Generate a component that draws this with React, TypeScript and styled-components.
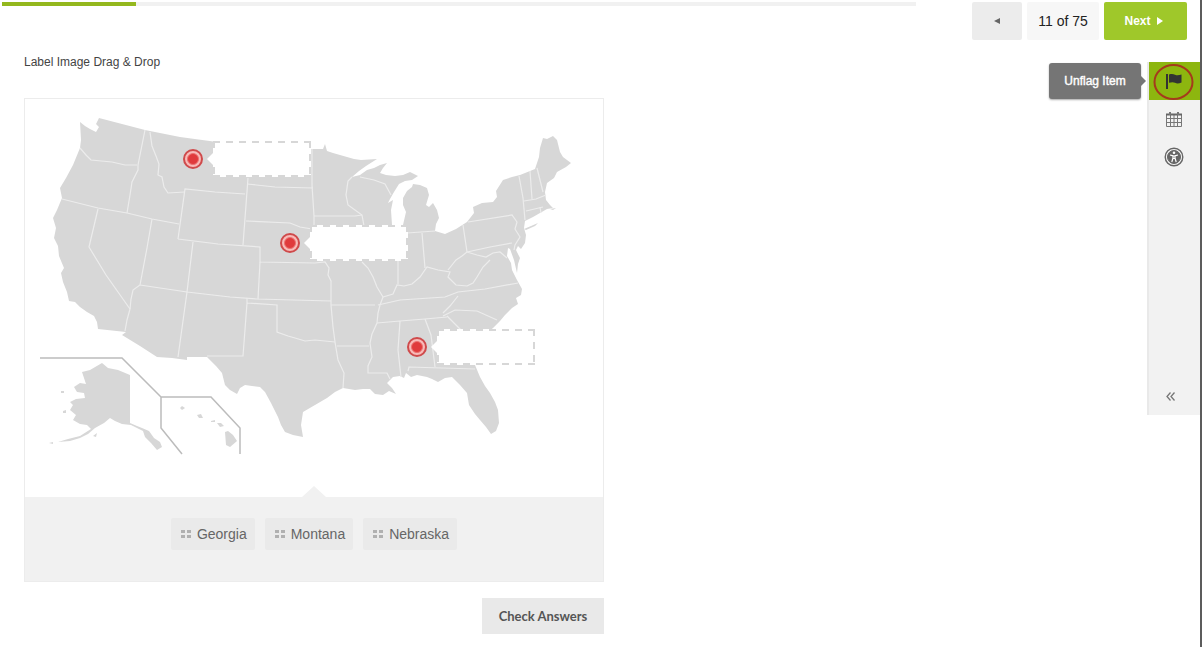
import React from "react";
import styled, { createGlobalStyle } from "styled-components";

const GlobalStyle = createGlobalStyle`
  *, *::before, *::after { box-sizing: border-box; }
  body {
    margin: 0;
    background: #fff;
    color: #444;
    font-family: "Liberation Sans", Arial, sans-serif;
    font-size: 12px;
    line-height: 16px;
  }
  button { font: inherit; color: inherit; border: 0; padding: 0; cursor: pointer; }
`;

const Page = styled.div`
  min-height: 100vh;
  margin-right: 1px;
  border-right: 2px solid #5c5c5c;
`;

const Header = styled.header`
  display: flex;
  align-items: flex-start;
  gap: 56px;
  padding: 2px 13px 0 2px;
`;

const Track = styled.div`
  flex: 1;
  height: 4px;
  background: #f1f1f1;
`;

const Fill = styled.div`
  height: 100%;
  background: #94b81e;
`;

const Pager = styled.nav`
  display: flex;
  gap: 5px;
  height: 38px;
`;

const PrevButton = styled.button`
  display: grid;
  place-items: center;
  width: 50px;
  background: #ececec;
  border-radius: 2px;
`;

const Count = styled.span`
  display: grid;
  place-items: center;
  width: 72px;
  background: #f7f7f7;
  border-radius: 2px;
  color: #222;
  font-size: 14px;
`;

const NextButton = styled.button`
  display: flex;
  align-items: center;
  justify-content: center;
  gap: 6px;
  width: 83px;
  padding-right: 4px;
  background: #9fc82a;
  border-radius: 2px;
  color: #fff;
  font-weight: 700;
`;

const Body = styled.div`
  display: flex;
  align-items: flex-start;
  justify-content: space-between;
`;

const Main = styled.main`
  flex: 0 1 604px;
  padding: 14px 0 13px 24px;
`;

const Title = styled.h1`
  margin: 0 0 28px;
  font-size: 12px;
  line-height: 16px;
  font-weight: 400;
`;

const Card = styled.section`
  border: 1px solid #ececec;
`;

const MapArea = styled.div`
  position: relative;
  overflow: hidden;
`;

const MapSvg = styled.svg`
  display: block;
  width: 100%;
  height: auto;
`;

const Pin = styled.div<{ $x: number; $y: number }>`
  position: absolute;
  left: ${(p) => p.$x}px;
  top: ${(p) => p.$y}px;
  display: flex;
  align-items: center;
  gap: 10px;
`;

const Marker = styled.span`
  display: grid;
  place-items: center;
  width: 20px;
  height: 20px;
  border: 2px solid #cf4a4b;
  border-radius: 50%;
  background: #f8bab8;

  &::before {
    content: "";
    width: 12px;
    height: 12px;
    border: 1px solid #ea7271;
    border-radius: 50%;
    background: #e03a3c;
  }
`;

const dash = "#d7d7d7 0 7px, #fff 7px 13px";

const DropZone = styled.div`
  position: relative;
  width: 98px;
  height: 36px;
  background:
    repeating-linear-gradient(90deg, ${dash}) left top / 100% 2px no-repeat,
    repeating-linear-gradient(90deg, ${dash}) left bottom / 100% 2px no-repeat,
    repeating-linear-gradient(180deg, ${dash}) left top / 2px 100% no-repeat,
    repeating-linear-gradient(180deg, ${dash}) right top / 2px 100% no-repeat,
    #fff;

  &::before {
    content: "";
    position: absolute;
    left: -6px;
    top: 10px;
    border: 8px solid transparent;
    border-left: 0;
    border-right-color: #fff;
  }
`;

const Tray = styled.div`
  position: relative;
  display: flex;
  justify-content: center;
  gap: 10px;
  padding: 21px 0 31px;
  background: #f1f1f1;

  &::before {
    content: "";
    position: absolute;
    left: 50%;
    top: -11px;
    margin-left: -12px;
    border: 12px solid transparent;
    border-top: 0;
    border-bottom: 11px solid #f1f1f1;
  }
`;

const Chip = styled.button`
  display: flex;
  align-items: center;
  gap: 6px;
  height: 32px;
  padding: 0 8px 0 10px;
  border-radius: 2px;
  background: #eaeaea;
  color: #666;
  font-size: 14px;
`;

const CheckButton = styled.button`
  display: block;
  width: 122px;
  height: 36px;
  margin: 16px 0 0 auto;
  background: #e9e9e9;
  color: #555;
  font-family: Lato, "Liberation Sans", sans-serif;
  font-size: 13px;
  font-weight: 700;
`;

const Sidebar = styled.aside`
  display: flex;
  flex-direction: column;
  width: 53px;
  min-height: 353px;
  margin-top: 22px;
  border-left: 2px solid #e9e9e9;
  background: #f2f2f2;
`;

const Tool = styled.button<{ $active?: boolean }>`
  position: relative;
  display: grid;
  place-items: center;
  height: 38px;
  padding-right: 2px;
  background: ${(p) => (p.$active ? "#8db60f" : "transparent")};
  color: ${(p) => (p.$active ? "#333" : "#666")};
`;

const Collapse = styled(Tool)`
  margin-top: auto;
  padding-right: 8px;
`;

const Ring = styled.svg`
  position: absolute;
  left: 4px;
  top: 0;
`;

const Tooltip = styled.span`
  position: absolute;
  right: 59px;
  top: 1px;
  width: 92px;
  height: 36px;
  border-radius: 3px;
  background: #757575;
  box-shadow: 0 1px 2px #aaa;
  color: #fff;
  font-size: 12px;
  line-height: 36px;
  text-align: center;
  -webkit-text-stroke: 0.4px #fff;

  &::after {
    content: "";
    position: absolute;
    right: -5px;
    top: 13px;
    border: 5px solid transparent;
    border-right: 0;
    border-left-color: #757575;
  }
`;

const mainland =
  "M80 122L85 126 90 129 96 132 99 127 96 124 99 118 122 124 145 130 180 137 217 142 260 147 312 149 323 149 325 144 327 151 333 153 340 155 347 157 354 159 361 160 377 159 366 166 359 171 352 177 360 175 367 170 374 168 380 165 387 163 383 168 380 173 386 175 395 176 403 175 410 172 418 176 412 180 405 181 399 184 394 192 390 199 388 203 393 200 391 210 392 225 394 240 400 250 407 245 405 232 403 225 406 212 403 205 403 198 407 191 412 187 413 184 420 185 427 188 429 195 426 205 429 207 433 203 437 210 439 218 436 224 435 231 445 234 456 229 467 222 474 213 473 207 482 203 493 202 497 197 496 191 503 180 512 177 520 175 535 169 539 157 540 148 543 138 547 139 553 136 557 140 560 152 563 157 571 163 566 167 557 172 554 178 547 183 545 192 546 200 550 205 553 208 547 209 540 213 533 217 525 221 524 228 526 235 525 243 521 249 518 246 516 250 520 258 518 264 517 273 514 260 510 249 508 248 507 256 511 263 512 270 517 280 522 289 521 295 516 298 518 304 512 308 505 315 500 321 493 328 486 334 480 345 476 356 475 365 480 377 485 386 490 393 495 402 498 410 499 423 496 431 491 434 486 427 480 420 475 414 469 405 467 393 460 385 452 377 445 378 438 382 432 379 427 377 417 375 411 377 406 373 404 378 400 376 393 377 390 380 387 383 392 388 396 394 389 391 383 395 375 394 370 389 363 389 355 390 343 388 335 392 327 398 315 405 303 412 301 425 303 437 293 435 285 432 281 425 278 417 271 403 265 392 260 387 252 386 245 385 240 388 237 394 230 390 225 385 222 373 216 366 207 357 187 357 187 360 172 358 157 357 140 346 122 335 126 332 98 329 97 322 94 316 87 312 80 307 75 302 69 301 67 292 63 282 61 273 64 268 59 256 58 246 54 238 56 228 53 218 57 210 62 198 60 188 66 178 73 165 80 148 81 140Z";

const alaska =
  "M82 372L90 370 102 363 108 368 118 370 130 375V423L137 426 142 428 149 431 154 438 160 442 162 447 157 450 151 443 145 437 143 431 131 425 122 424 115 421 110 418 104 423 95 428 88 434 80 438 70 441 58 442 68 439 80 436 91 429 87 425 80 424 73 420 76 415 70 410 73 405 70 402 76 399 85 398 84 393 77 392 74 387 80 383 86 384Z";

const stateLines = [
  "M80 148L86 155 91 160 112 162 125 165 137 165",
  "M145 130L141 150 138 165 138 170 132 182 130 195 127 213",
  "M150 132L152 146 156 156 159 164 158 175 162 177 164 187 168 193 185 192",
  "M62 199L98 208 127 213 152 219 179 224",
  "M178 239L185 189 215 192 245 194M178 239L218 244 260 247V262L315 263",
  "M98 209L89 247 106 275 130 309 127 320 125 331",
  "M152 219L147 248 140 285 133 290 131 299 130 309M140 285L187 292 230 297 257 299 331 301",
  "M193 242L187 292 178 357M248 178L243 245M260 262L258 299",
  "M247 298V303L243 356H207M247 303L277 305 277 332 288 336 295 338 305 341 315 340 335 342",
  "M247 184L275 187 313 188M246 221L290 223 300 227 312 229M312 149L312 185 314 216V229M314 216L355 216 362 215",
  "M352 177L348 181 346 195 348 205 355 210 362 215 364 226M360 177L374 180 385 184 391 195",
  "M315 263L325 262 329 268 328 275 331 281 331 305 333 327 335 342 338 360 344 373 343 388",
  "M331 305H375M337 346H369",
  "M362 262L368 268 373 277 377 287 383 297 380 305 378 313 377 323 372 334 370 343 372 357 368 366 368 373 387 373 390 379",
  "M400 321L398 350 401 377M377 323L400 321 425 319 447 317",
  "M378 305L400 300 445 297 458 292 485 289 518 283",
  "M383 297L393 294 397 285 404 286 412 284 420 277 427 267 438 270 450 272 448 277 456 285 467 286 473 283 477 277 483 267 490 260",
  "M398 260V284M407 233L435 231M422 233L425 268M448 270L456 260 462 256 467 252 463 225",
  "M467 252L490 247 512 243M468 222L512 215 517 222 515 229 520 237 515 245 514 250M467 252L477 255 486 257 493 253 500 252 507 258",
  "M443 313L450 306 458 296M443 316L455 310 477 311 497 320M447 316L455 324 465 334M425 319L431 335 435 367M408 371L409 367 475 369",
  "M519 176L523 198 525 220M530 171L532 199M537 168L543 192M524 201L536 199 546 195M526 211L543 207M540 207L541 213",
];

const pins = [
  { id: "montana", label: "Drop area for the northern marker", x: 158, y: 42 },
  { id: "nebraska", label: "Drop area for the central marker", x: 255, y: 126 },
  { id: "georgia", label: "Drop area for the southern marker", x: 382, y: 230 },
];

const UsMap = () => (
  <MapSvg viewBox="25 99 578 398" role="img" aria-label="Map of the United States">
    <g fill="#d7d7d7" strokeLinejoin="round">
      <path d={mainland} />
      <path d={alaska} />
      <path d="M524 229L538 223 535 226 526 230ZM93 436L97 433 96 437ZM61 391H64V393H61ZM63 411L66 410V413H63ZM49 443L53 442V444ZM550 209L556 208 553 210Z" />
      <path d="M180 408L182 406 185 408 182 410ZM197 415L201 414 203 418 199 418ZM211 421L215 420V422H211ZM217 423L221 423 224 426 220 427ZM225 432L228 431 233 435 237 441 230 447 226 445Z" />
    </g>
    <g fill="none" stroke="#ececec" strokeWidth="1.2">
      {stateLines.map((d) => (
        <path key={d} d={d} />
      ))}
    </g>
    <path
      d="M40 358H122L161 397H211L240 428V454M161 397V428L182 454"
      fill="none"
      stroke="#bcbcbc"
      strokeWidth="1.5"
    />
  </MapSvg>
);

const Grip = () => (
  <svg width="10" height="8" viewBox="0 0 10 8" fill="#b0b0b0" aria-hidden="true">
    <path d="M0 0H4V3H0ZM6 0H10V3H6ZM0 5H4V8H0ZM6 5H10V8H6Z" />
  </svg>
);

export default function App() {
  const current = 11;
  const total = 75;
  return (
    <Page>
      <GlobalStyle />
      <Header>
        <Track
          role="progressbar"
          aria-label="Progress"
          aria-valuenow={current}
          aria-valuemin={0}
          aria-valuemax={total}
        >
          <Fill style={{ width: `${(current / total) * 100}%` }} />
        </Track>
        <Pager aria-label="Items">
          <PrevButton aria-label="Previous">
            <svg width="6" height="8" viewBox="0 0 6 8" fill="#666">
              <path d="M6 1V7L0 4Z" />
            </svg>
          </PrevButton>
          <Count>
            {current} of {total}
          </Count>
          <NextButton>
            Next
            <svg width="6" height="8" viewBox="0 0 6 8" fill="#fff" aria-hidden="true">
              <path d="M0 0V8L6 4Z" />
            </svg>
          </NextButton>
        </Pager>
      </Header>
      <Body>
        <Main>
          <Title>Label Image Drag &amp; Drop</Title>
          <Card>
            <MapArea>
              <UsMap />
              {pins.map((pin) => (
                <Pin key={pin.id} $x={pin.x} $y={pin.y}>
                  <Marker />
                  <DropZone role="group" aria-label={pin.label} />
                </Pin>
              ))}
            </MapArea>
            <Tray>
              {["Georgia", "Montana", "Nebraska"].map((name) => (
                <Chip key={name}>
                  <Grip />
                  {name}
                </Chip>
              ))}
            </Tray>
          </Card>
          <CheckButton>Check Answers</CheckButton>
        </Main>
        <Sidebar>
          <Tool $active aria-label="Unflag item">
            <svg width="16" height="16" viewBox="0 0 16 16" fill="#333" aria-hidden="true">
              <path d="M0 1H2V16H0ZM3 1.500C5.500 0.800 7.500 1 9 1.800C11 2.600 13 2.400 15.500 1.500V9.500C13 10.500 11 10.800 9 9.800C7.500 9 5.500 9 3 9.800Z" />
            </svg>
            <Ring width="41" height="38" viewBox="0 0 41 38" fill="none" aria-hidden="true">
              <ellipse cx="20.500" cy="20" rx="19" ry="17" stroke="#a53a1c" strokeWidth="2" />
            </Ring>
            <Tooltip>Unflag Item</Tooltip>
          </Tool>
          <Tool aria-label="Calendar">
            <svg width="18" height="17" viewBox="0 0 18 17" fill="none" stroke="#777" aria-hidden="true">
              <path d="M1.500 3.500H16.500V15.500H1.500ZM1.500 7.500H16.500M1.500 11.500H16.500M5.500 4V15.500M9 4V15.500M12.500 4V15.500" />
              <path d="M1 3.500H17" stroke="#666" strokeWidth="2" />
              <path d="M5 1V4M13 1V4" strokeWidth="2" />
            </svg>
          </Tool>
          <Tool aria-label="Accessibility">
            <svg width="20" height="20" viewBox="0 0 20 20" fill="none" stroke="#666" aria-hidden="true">
              <circle cx="10" cy="10" r="8.800" strokeWidth="1.400" />
              <circle cx="10" cy="10" r="6.500" fill="#666" />
              <circle cx="10" cy="5.800" r="1.300" fill="#fff" stroke="none" />
              <path d="M6 8L9 8.800V11L7.800 15M14 8L11 8.800V11L12.200 15M9 9H11V11.500H9Z" stroke="#fff" strokeWidth="1.200" />
            </svg>
          </Tool>
          <Collapse aria-label="Collapse">
            <svg width="9" height="9" viewBox="0 0 9 9" fill="none" stroke="#777" strokeWidth="1.300" aria-hidden="true">
              <path d="M4.500 0.500L1 4.500 4.500 8.500M8.500 0.500L5 4.500 8.500 8.500" />
            </svg>
          </Collapse>
        </Sidebar>
      </Body>
    </Page>
  );
}
